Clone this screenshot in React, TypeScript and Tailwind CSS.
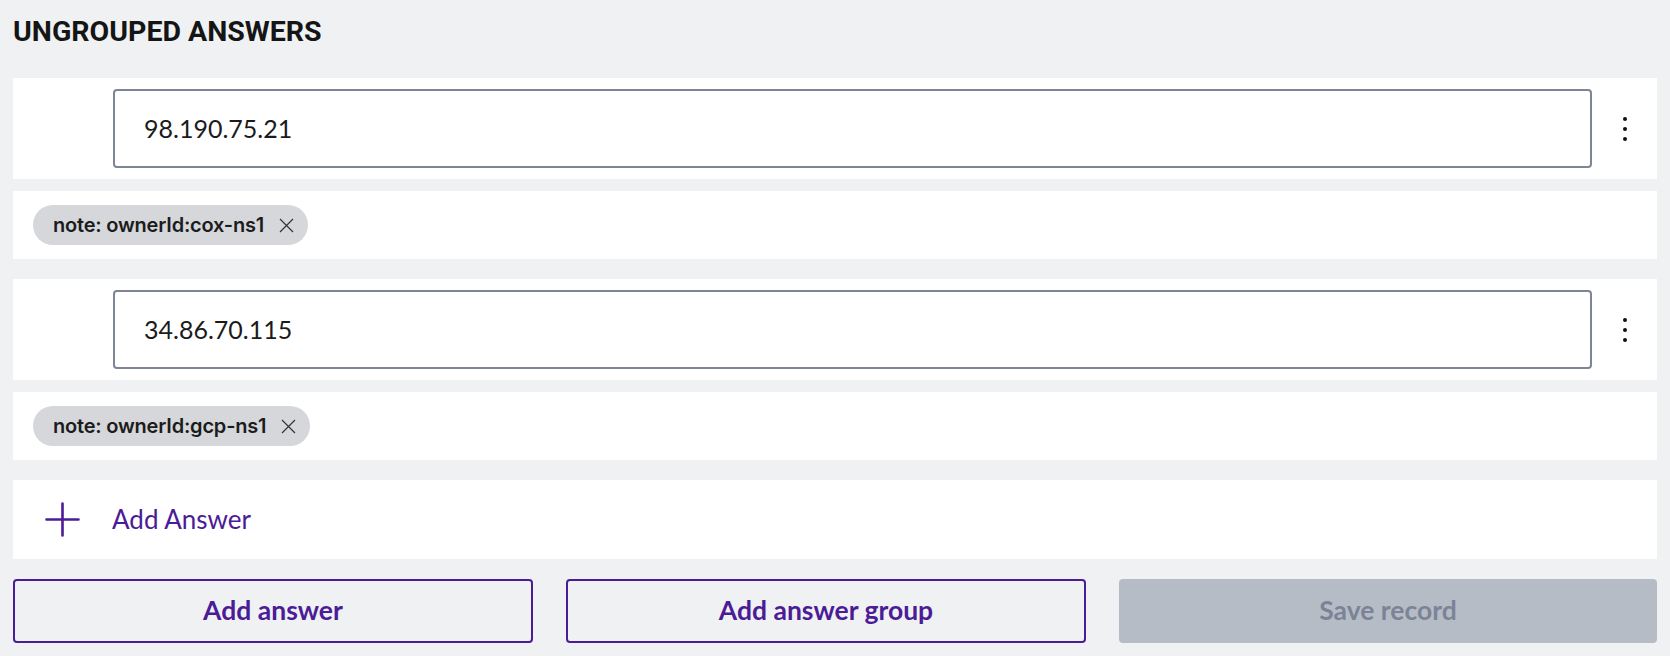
const answers = [
  { value: "98.190.75.21", note: "note: ownerId:cox-ns1" },
  { value: "34.86.70.115", note: "note: ownerId:gcp-ns1" },
];

function Kebab() {
  return (
    <div className="w-[65px] flex flex-col items-center gap-[6px]">
      <span className="w-[4px] h-[4px] rounded-full bg-[#111]" />
      <span className="w-[4px] h-[4px] rounded-full bg-[#111]" />
      <span className="w-[4px] h-[4px] rounded-full bg-[#111]" />
    </div>
  );
}

function AnswerGroup({ value, note }: { value: string; note: string }) {
  return (
    <div className="flex flex-col gap-[12px]">
      <div className="bg-white h-[101px] flex items-center pl-[100px]">
        <div className="flex-1 h-[79px] rounded-[4px] border-2 border-[#7d8597] flex items-center pl-[29px] text-[25px] text-[#1b1b1b] font-['Lato',sans-serif]">
          {value}
        </div>
        <Kebab />
      </div>
      <div className="bg-white h-[68px] flex items-center px-[20px]">
        <div className="h-[40px] rounded-full bg-[#d5d7db] flex items-center pl-[20px] pr-[14px] gap-[15px]">
          <span className="text-[20px] font-semibold text-[#1c1c1c] font-['Inter',sans-serif] tracking-[-0.2px]">
            {note}
          </span>
          <svg width="15" height="15" viewBox="0 0 15 15" fill="none" stroke="#333" strokeWidth="1.2">
            <path d="M1 1L14 14M14 1L1 14" />
          </svg>
        </div>
      </div>
    </div>
  );
}

export default function App() {
  return (
    <div className="min-h-screen bg-[#f0f1f3] px-[13px] font-['Lato',sans-serif]">
      <h2 className="text-[28.5px] font-bold text-[#151515] leading-[34px] pt-[15px] pb-[29px] font-['Roboto',sans-serif]">
        UNGROUPED ANSWERS
      </h2>
      <div className="flex flex-col gap-[20px]">
        {answers.map((a) => (
          <AnswerGroup key={a.value} value={a.value} note={a.note} />
        ))}
        <div className="bg-white h-[79px] flex items-center pl-[32px] gap-[32px]">
          <svg width="35" height="35" viewBox="0 0 35 35" fill="none" stroke="#4b1c96" strokeWidth="2.6" strokeLinecap="round">
            <path d="M17.5 1.5V33.5M1.5 17.5H33.5" />
          </svg>
          <span className="text-[26px] text-[#4b1c96]">Add Answer</span>
        </div>
      </div>
      <div className="grid grid-cols-[520px_520px_1fr] gap-x-[33px] mt-[20px]">
        <button className="h-[64px] rounded-[4px] border-2 border-[#4b1c96] text-[#4b1c96] text-[26.5px] font-bold">
          Add answer
        </button>
        <button className="h-[64px] rounded-[4px] border-2 border-[#4b1c96] text-[#4b1c96] text-[26.5px] font-bold">
          Add answer group
        </button>
        <button className="h-[64px] rounded-[4px] bg-[#b6bcc6] text-[#7b8496] text-[26.5px] font-bold">
          Save record
        </button>
      </div>
    </div>
  );
}
